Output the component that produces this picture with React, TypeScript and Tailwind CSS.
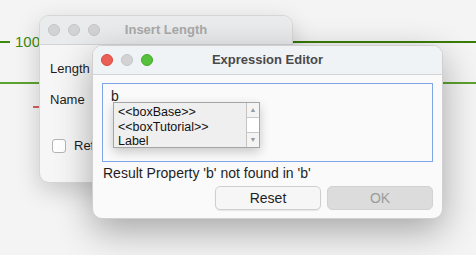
import React from "react";

const font = { fontFamily: '"Liberation Sans", Arial, sans-serif' };

const Light = ({ color }: { color: string }) => (
  <div className={`w-[12px] h-[12px] rounded-full ${color}`} />
);

const InsertLength = () => {
  return (
    <div className="absolute left-[39px] top-[15px] w-[254px] h-[168px] rounded-[10px] bg-[#f6f6f6] border border-[#d6d6d6] shadow-[0_8px_24px_rgba(0,0,0,0.18)] overflow-hidden">
      <div className="relative h-[29px] flex items-center px-[8px] gap-[8px] bg-[#e9ebed] border-b border-[#d4d4d4]">
        <Light color="bg-[#d3d3d5] border border-[#c4c4c6]" />
        <Light color="bg-[#d3d3d5] border border-[#c4c4c6]" />
        <Light color="bg-[#d3d3d5] border border-[#c4c4c6]" />
        <div className="absolute inset-0 flex items-center justify-center text-[13px] font-bold text-[#a9a9a9]">
          Insert Length
        </div>
      </div>
      <div className="flex flex-col pl-[10px] text-[13px] leading-[15px] text-[#1e1e1e]">
        <div className="mt-[16px]">Length</div>
        <div className="mt-[16px]">Name</div>
        <div className="mt-[31px] flex items-center gap-[8px]">
          <div className="ml-[2px] w-[14px] h-[14px] rounded-[3px] border border-[#b4b4b4] bg-white" />
          <span>Reference</span>
        </div>
      </div>
    </div>
  );
};

const Completion = () => {
  const items = ["<<boxBase>>", "<<boxTutorial>>", "Label"];
  return (
    <div className="absolute left-[10px] top-[18px] w-[147px] h-[46px] flex bg-[#efefef] border border-[#a5a5a5] shadow-[0_4px_10px_rgba(0,0,0,0.2)]">
      <div className="flex-1 flex flex-col pl-[4px] pt-[2px] text-[12.5px] leading-[14.5px] text-[#111] overflow-hidden">
        {items.map((i) => (
          <div key={i} className="h-[14.5px]">
            {i}
          </div>
        ))}
      </div>
      <div className="w-[13px] flex flex-col border-l border-[#c4c4c4] bg-[#f4f4f4]">
        <div className="h-[15px] flex items-center justify-center border-b border-[#c8c8c8] text-[7px] text-[#9a9a9a]">
          ▲
        </div>
        <div className="flex-1 bg-white border-b border-[#c8c8c8]" />
        <div className="h-[14px] flex items-center justify-center text-[7px] text-[#9a9a9a]">
          ▼
        </div>
      </div>
    </div>
  );
};

const ExpressionEditor = () => {
  return (
    <div className="absolute left-[92px] top-[45px] w-[351px] h-[174px] rounded-[10px] bg-[#fafafa] border border-[#d0d0d0] shadow-[0_12px_36px_rgba(0,0,0,0.32)] overflow-hidden">
      <div className="relative h-[29px] flex items-center px-[8px] gap-[8px] bg-[#f0f3f6] border-b border-[#d4d4d4]">
        <Light color="bg-[#ec5f57] border border-[#d8463f]" />
        <Light color="bg-[#d3d3d5] border border-[#c4c4c6]" />
        <Light color="bg-[#56c13a] border border-[#44a92b]" />
        <div className="absolute inset-0 flex items-center justify-center text-[13px] font-bold text-[#4a4a4a]">
          Expression Editor
        </div>
      </div>
      <div className="flex flex-col px-[9px] pt-[8px] text-[13px] text-[#1e1e1e]">
        <div className="relative h-[79px] border border-[#7ea6e6] bg-[#fafafa]">
          <div className="pl-[8px] pt-[5px] text-[14px] leading-[14px]">b</div>
          <Completion />
        </div>
        <div className="mt-[3px] pl-[1px] text-[14px] leading-[16px]">
          Result Property 'b' not found in 'b'
        </div>
        <div className="mt-[5px] flex justify-end gap-[6px]">
          <button className="w-[106px] h-[24px] rounded-[5px] border border-[#cfcfcf] bg-[#f6f6f6] text-[14px] text-[#1e1e1e] shadow-[0_1px_1px_rgba(0,0,0,0.08)]">
            Reset
          </button>
          <button className="w-[106px] h-[24px] rounded-[5px] border border-[#d2d2d2] bg-[#dcdcdc] text-[14px] text-[#9b9b9b]">
            OK
          </button>
        </div>
      </div>
    </div>
  );
};

export default function App() {
  return (
    <div
      className="relative w-[476px] h-[255px] overflow-hidden bg-[#f4f4f4]"
      style={font}
    >
      <div className="absolute left-0 top-[41px] w-[10px] h-[2px] bg-[#3d8a10]" />
      <div className="absolute left-[15px] top-[33px] text-[15px] leading-[18px] text-[#3d8a10]">
        100
      </div>
      <div className="absolute left-[45px] right-0 top-[41px] h-[2px] bg-[#3a7d08]" />
      <div className="absolute left-0 right-0 top-[82px] h-[2px] bg-[#5ca22e]" />
      <div className="absolute left-[33px] top-[106px] w-[12px] h-[2px] bg-[#d86060]" />
      <InsertLength />
      <ExpressionEditor />
    </div>
  );
}
